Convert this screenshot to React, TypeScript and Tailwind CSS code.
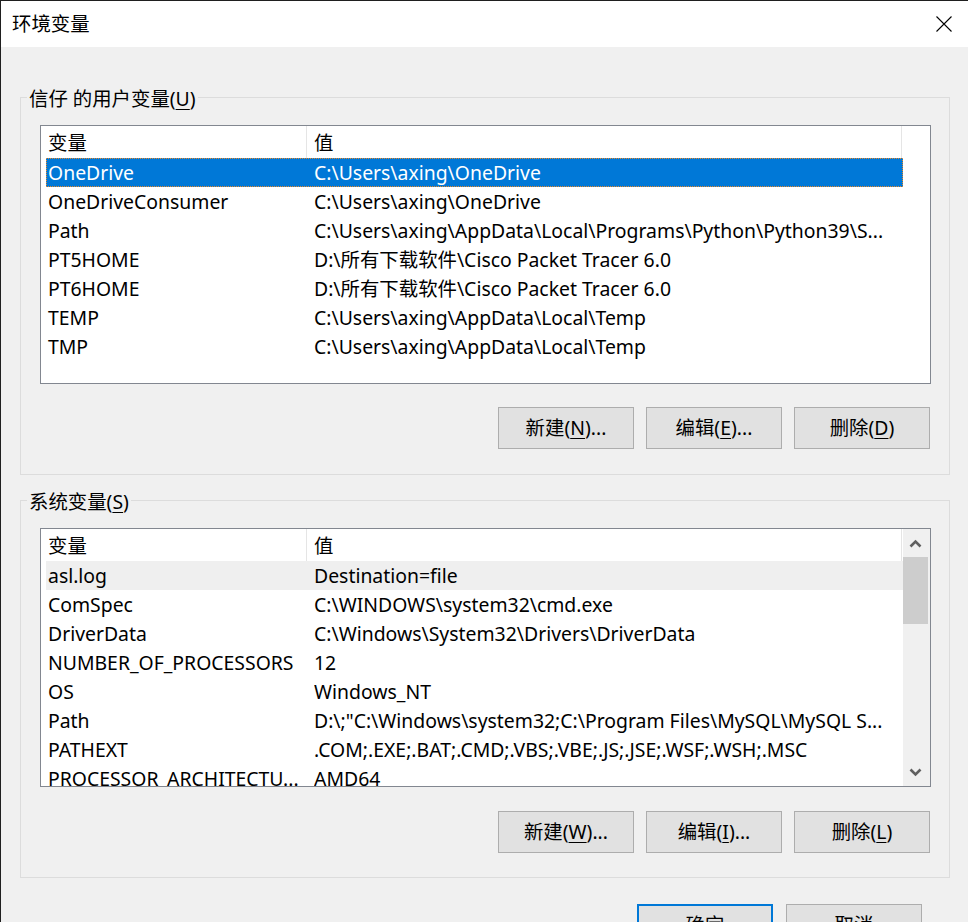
import type { ReactNode } from "react";

interface EnvVar {
  name: string;
  value: string;
}

const userVars: EnvVar[] = [
  { name: "OneDrive", value: "C:\\Users\\axing\\OneDrive" },
  { name: "OneDriveConsumer", value: "C:\\Users\\axing\\OneDrive" },
  {
    name: "Path",
    value: "C:\\Users\\axing\\AppData\\Local\\Programs\\Python\\Python39\\S...",
  },
  { name: "PT5HOME", value: "D:\\所有下载软件\\Cisco Packet Tracer 6.0" },
  { name: "PT6HOME", value: "D:\\所有下载软件\\Cisco Packet Tracer 6.0" },
  { name: "TEMP", value: "C:\\Users\\axing\\AppData\\Local\\Temp" },
  { name: "TMP", value: "C:\\Users\\axing\\AppData\\Local\\Temp" },
];

const systemVars: EnvVar[] = [
  { name: "asl.log", value: "Destination=file" },
  { name: "ComSpec", value: "C:\\WINDOWS\\system32\\cmd.exe" },
  { name: "DriverData", value: "C:\\Windows\\System32\\Drivers\\DriverData" },
  { name: "NUMBER_OF_PROCESSORS", value: "12" },
  { name: "OS", value: "Windows_NT" },
  {
    name: "Path",
    value: 'D:\\;"C:\\Windows\\system32;C:\\Program Files\\MySQL\\MySQL S...',
  },
  { name: "PATHEXT", value: ".COM;.EXE;.BAT;.CMD;.VBS;.VBE;.JS;.JSE;.WSF;.WSH;.MSC" },
  { name: "PROCESSOR_ARCHITECTU...", value: "AMD64" },
];

const Key = ({ children }: { children: ReactNode }) => (
  <span className="underline decoration-1 underline-offset-[3px]">{children}</span>
);

const DialogButton = ({
  children,
  primary = false,
}: {
  children: ReactNode;
  primary?: boolean;
}) => (
  <button
    type="button"
    className={`flex h-[42px] w-[136px] items-center justify-center bg-[#e1e1e1] text-[19.4px] text-black ${
      primary ? "border-2 border-[#0078d7]" : "border border-[#adadad]"
    }`}
  >
    {children}
  </button>
);

const Chevron = ({ down = false }: { down?: boolean }) => (
  <svg width="13" height="9" viewBox="0 0 13 9" className={down ? "rotate-180" : ""}>
    <path d="M1.5 7.5 L6.5 2.5 L11.5 7.5" fill="none" stroke="#606060" strokeWidth="2.6" />
  </svg>
);

const Scrollbar = () => (
  <div className="flex h-full w-[27px] flex-col bg-[#f0f0f0]">
    <div className="flex h-[28px] items-center justify-center pr-[2px]">
      <Chevron />
    </div>
    <div className="h-[67px] w-[25px] bg-[#cdcdcd]" />
    <div className="flex-1" />
    <div className="flex h-[28px] items-center justify-center pr-[2px]">
      <Chevron down />
    </div>
  </div>
);

const ListView = ({
  rows,
  selected,
  hovered,
  scroll = false,
}: {
  rows: EnvVar[];
  selected?: number;
  hovered?: number;
  scroll?: boolean;
}) => (
  <div className="flex h-[259px] w-[891px] overflow-hidden border border-[#828790] bg-white">
    <div className="min-w-0 flex-1">
      <div className="flex h-[32px] w-[861px]">
        <div className="flex w-[265px] items-center pl-[7px] pt-[1px]">变量</div>
        <div className="flex w-[596px] items-center border-x border-[#e5e5e5] pl-[7px] pt-[1px]">
          值
        </div>
      </div>
      {rows.map((row, i) => {
        let state = "";
        if (i === selected) {
          state =
            "bg-[#0078d7] text-white outline-1 outline-dotted outline-[#e8892b] -outline-offset-1";
        } else if (i === hovered) {
          state = "bg-[#efefef]";
        }
        return (
          <div
            key={row.name}
            className={`ml-[5px] flex h-[29px] w-[857px] shrink-0 items-center ${state}`}
          >
            <div className="w-[268px] overflow-hidden whitespace-nowrap pl-[2px] pr-[6px]">
              {row.name}
            </div>
            <div className="min-w-0 flex-1 overflow-hidden whitespace-nowrap">{row.value}</div>
          </div>
        );
      })}
    </div>
    {scroll && <Scrollbar />}
  </div>
);

export default function App() {
  return (
    <div className="h-[922px] w-[968px] overflow-hidden border-l border-t border-[#1f1f1f] bg-[#f0f0f0] font-['Noto_Sans','Noto_Sans_CJK_SC',sans-serif] text-[19.4px] text-black">
      <div className="flex h-[46px] items-center justify-between bg-white pl-[11px] pr-[16px]">
        <span>环境变量</span>
        <svg width="16" height="16" viewBox="0 0 16 16">
          <path d="M0.5 0.5 L15.5 15.5 M15.5 0.5 L0.5 15.5" stroke="#000" strokeWidth="1.1" />
        </svg>
      </div>

      <fieldset className="ml-[19px] mt-[36px] w-[930px] border border-[#dcdcdc] pb-[25px]">
        <legend className="ml-[6px] px-[2px] pt-[4px] leading-[24px]">
          信仔 的用户变量(<Key>U</Key>)
        </legend>
        <div className="pl-[19px] pt-[14px]">
          <ListView rows={userVars} selected={0} />
          <div className="mt-[23px] flex w-[890px] justify-end gap-[12px]">
            <DialogButton>
              新建(<Key>N</Key>)...
            </DialogButton>
            <DialogButton>
              编辑(<Key>E</Key>)...
            </DialogButton>
            <DialogButton>
              删除(<Key>D</Key>)
            </DialogButton>
          </div>
        </div>
      </fieldset>

      <fieldset className="ml-[19px] mt-[11px] w-[930px] border border-[#dcdcdc] pb-[24px]">
        <legend className="ml-[6px] px-[2px] pt-[4px] leading-[24px]">
          系统变量(<Key>S</Key>)
        </legend>
        <div className="pl-[19px] pt-[14px]">
          <ListView rows={systemVars} hovered={0} scroll />
          <div className="mt-[24px] flex w-[890px] justify-end gap-[12px]">
            <DialogButton>
              新建(<Key>W</Key>)...
            </DialogButton>
            <DialogButton>
              编辑(<Key>I</Key>)...
            </DialogButton>
            <DialogButton>
              删除(<Key>L</Key>)
            </DialogButton>
          </div>
        </div>
      </fieldset>

      <div className="mt-[26px] flex justify-end gap-[13px] pr-[46px]">
        <DialogButton primary>确定</DialogButton>
        <DialogButton>取消</DialogButton>
      </div>
    </div>
  );
}
